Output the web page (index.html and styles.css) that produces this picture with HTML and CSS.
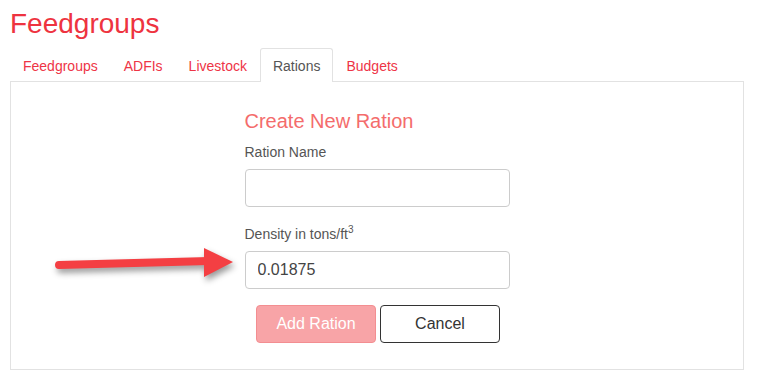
FILE: index.html
```html
<!DOCTYPE html>
<html>
  <head>
    <meta name="viewport" content="width=device-width, initial-scale=1.0">
    <link rel="stylesheet" href="styles.css">
  </head>
  <body>
    <div class="page">
      <h1 class="title">Feedgroups</h1>
      <ul class="tabs">
        <li><a href="#">Feedgroups</a></li>
        <li><a href="#">ADFIs</a></li>
        <li><a href="#">Livestock</a></li>
        <li class="active"><a href="#">Rations</a></li>
        <li><a href="#">Budgets</a></li>
      </ul>
      <div class="panel">
        <!-- annotation arrow pointing at the density field -->
        <svg class="arrow" width="210" height="55" viewBox="0 0 210 55">
          <line x1="18" y1="29" x2="168" y2="25" stroke="#f43f43" stroke-width="8" stroke-linecap="round"/>
          <polygon points="163,12 192,26 163,41" fill="#f43f43"/>
        </svg>
        <form class="ration-form">
          <h2>Create New Ration</h2>
          <label for="rationName">Ration Name</label>
          <input id="rationName" type="text">
          <label for="density">Density in tons/ft<sup>3</sup></label>
          <input id="density" type="text" value="0.01875">
          <div class="actions">
            <button type="button" class="btn btn-add">Add Ration</button>
            <button type="button" class="btn btn-cancel">Cancel</button>
          </div>
        </form>
      </div>
    </div>
  </body>
</html>
```
FILE: styles.css
```css
/* Base page */
body {
  margin: 0;
  font-family: "Liberation Sans", Arial, sans-serif;
  background: #fff;
}
.page {
  padding: 8px 14px 0 10px;
}
.title {
  margin: 0 0 9px;
  font-size: 28px;
  line-height: 31px;
  font-weight: normal;
  color: #ee3340;
}

/* Tabs */
.tabs {
  display: flex;
  list-style: none;
  margin: 0;
  padding: 0;
  position: relative;
  z-index: 1;
}
.tabs li {
  margin-bottom: -1px;
}
.tabs a {
  display: block;
  padding: 7px 12px 6px;
  font-size: 14px;
  line-height: 20px;
  color: #ee3446;
  text-decoration: none;
  border: 1px solid transparent;
  border-bottom: none;
}
.tabs li.active a {
  color: #555;
  background: #fff;
  border-color: #e2e2e2;
  border-radius: 3px 3px 0 0;
}

/* Panel */
.panel {
  position: relative;
  border: 1px solid #e2e2e2;
  padding: 27px 0 26px;
}
.arrow {
  position: absolute;
  left: 30px;
  top: 154px;
  filter: drop-shadow(2px 4px 3px rgba(0, 0, 0, 0.4));
}

/* Form */
.ration-form {
  width: 265px;
  margin: 0 auto;
}
.ration-form h2 {
  margin: 0 0 9px;
  font-size: 20px;
  line-height: 24px;
  font-weight: normal;
  color: #f46c6c;
}
.ration-form label {
  display: block;
  font-size: 14px;
  line-height: 20px;
  color: #555;
  margin-bottom: 7px;
}
.ration-form label sup {
  font-size: 10px;
  line-height: 0;
}
.ration-form input {
  display: block;
  box-sizing: border-box;
  width: 100%;
  height: 38px;
  margin: 0 0 17px;
  padding: 0 12px;
  border: 1px solid #ccc;
  border-radius: 4px;
  font-family: inherit;
  font-size: 16px;
  color: #444;
}
.ration-form input#density {
  margin-bottom: 16px;
}
.actions {
  display: flex;
  justify-content: center;
  gap: 4px;
  padding-left: 2px;
}
.btn {
  box-sizing: border-box;
  width: 120px;
  height: 38px;
  border-radius: 4px;
  font-family: inherit;
  font-size: 16px;
}
.btn-add {
  background: #f8a4a7;
  border: 1px solid #f38e91;
  color: #fff;
}
.btn-cancel {
  background: #fff;
  border: 1px solid #333;
  color: #333;
}
```
